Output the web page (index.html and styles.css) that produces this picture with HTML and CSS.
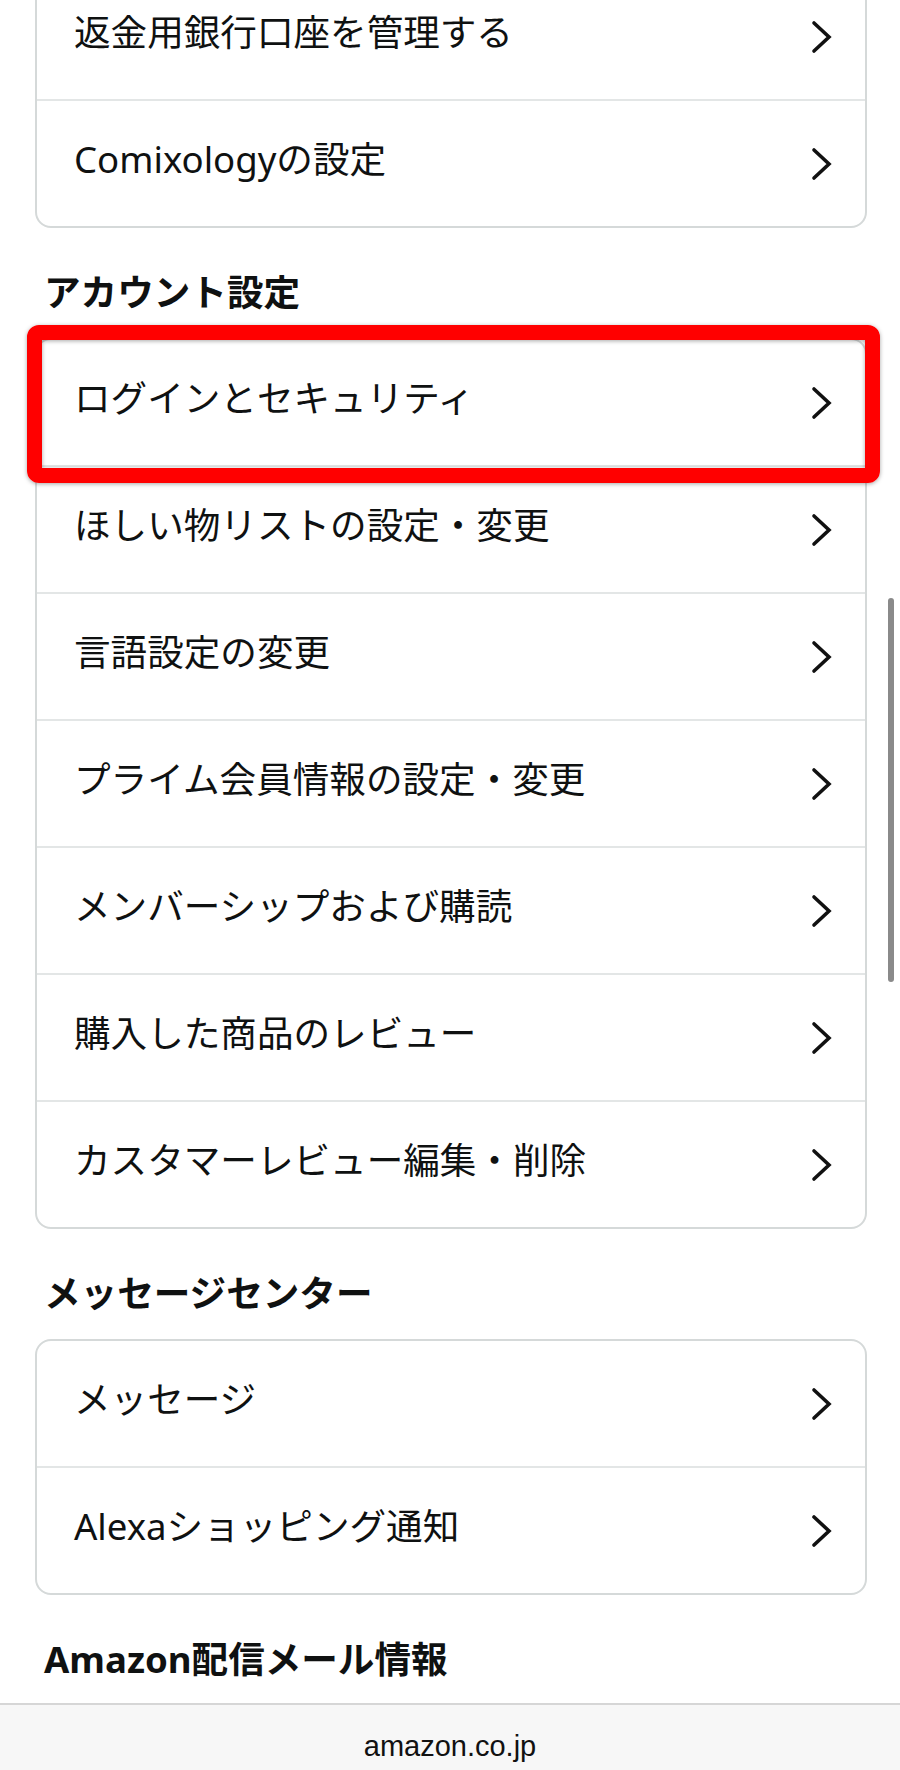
FILE: index.html
```html
<!DOCTYPE html>
<html lang="ja">
<head>
<meta charset="utf-8">
<title>アカウントサービス</title>
<link rel="stylesheet" href="styles.css">
</head>
<body>
<main class="page">
  <section class="section">
    <div class="card">
      <a class="row" href="#"><span class="label">返金用銀行口座を管理する</span><svg class="chev" viewBox="0 0 22 34" width="22" height="34"><polyline points="3,3 18,17 3,31"/></svg></a>
      <a class="row" href="#"><span class="label">Comixologyの設定</span><svg class="chev" viewBox="0 0 22 34" width="22" height="34"><polyline points="3,3 18,17 3,31"/></svg></a>
    </div>
  </section>

  <section class="section">
    <h2 class="section-title">アカウント設定</h2>
    <div class="card card--marked">
      <div class="highlight"></div>
      <a class="row" href="#"><span class="label">ログインとセキュリティ</span><svg class="chev" viewBox="0 0 22 34" width="22" height="34"><polyline points="3,3 18,17 3,31"/></svg></a>
      <a class="row" href="#"><span class="label">ほしい物リストの設定・変更</span><svg class="chev" viewBox="0 0 22 34" width="22" height="34"><polyline points="3,3 18,17 3,31"/></svg></a>
      <a class="row" href="#"><span class="label">言語設定の変更</span><svg class="chev" viewBox="0 0 22 34" width="22" height="34"><polyline points="3,3 18,17 3,31"/></svg></a>
      <a class="row" href="#"><span class="label">プライム会員情報の設定・変更</span><svg class="chev" viewBox="0 0 22 34" width="22" height="34"><polyline points="3,3 18,17 3,31"/></svg></a>
      <a class="row" href="#"><span class="label">メンバーシップおよび購読</span><svg class="chev" viewBox="0 0 22 34" width="22" height="34"><polyline points="3,3 18,17 3,31"/></svg></a>
      <a class="row" href="#"><span class="label">購入した商品のレビュー</span><svg class="chev" viewBox="0 0 22 34" width="22" height="34"><polyline points="3,3 18,17 3,31"/></svg></a>
      <a class="row" href="#"><span class="label">カスタマーレビュー編集・削除</span><svg class="chev" viewBox="0 0 22 34" width="22" height="34"><polyline points="3,3 18,17 3,31"/></svg></a>
    </div>
  </section>

  <section class="section">
    <h2 class="section-title">メッセージセンター</h2>
    <div class="card">
      <a class="row" href="#"><span class="label">メッセージ</span><svg class="chev" viewBox="0 0 22 34" width="22" height="34"><polyline points="3,3 18,17 3,31"/></svg></a>
      <a class="row" href="#"><span class="label">Alexaショッピング通知</span><svg class="chev" viewBox="0 0 22 34" width="22" height="34"><polyline points="3,3 18,17 3,31"/></svg></a>
    </div>
  </section>

  <section class="section">
    <h2 class="section-title">Amazon配信メール情報</h2>
  </section>
</main>

<div class="scrollbar"></div>

<footer class="url-bar">amazon.co.jp</footer>
</body>
</html>
```

FILE: styles.css
```css
html, body {
  margin: 0;
  padding: 0;
  background: #ffffff;
}

body {
  font-family: "Noto Sans", "Noto Sans CJK JP", sans-serif;
  color: #0f1111;
  overflow: hidden;
}

.page {
  display: flex;
  flex-direction: column;
  gap: 44px;
  margin-top: -28px;
  padding: 0 33px 120px 35px;
}

.section {
  display: flex;
  flex-direction: column;
  gap: 22px;
}

.section-title {
  margin: 0 0 0 9px;
  padding-bottom: 4px;
  font-size: 36.6px;
  line-height: 40px;
  font-weight: 700;
  color: #0f1111;
}

.card {
  position: relative;
  display: flex;
  flex-direction: column;
  background: #ffffff;
  border: 2px solid #d5d9d9;
  border-radius: 16px;
}

.row {
  display: flex;
  align-items: center;
  justify-content: space-between;
  height: 125px;
  padding: 0 32px 0 37px;
  color: #0f1111;
  text-decoration: none;
  font-size: 36.6px;
  line-height: 44px;
}

.row + .row {
  border-top: 2px solid #e3e6e6;
}

.label {
  white-space: nowrap;
  margin-bottom: 9px;
}

.chev {
  flex: none;
  display: block;
}

.chev polyline {
  fill: none;
  stroke: #111111;
  stroke-width: 3.6;
  stroke-linecap: round;
  stroke-linejoin: miter;
}

.highlight {
  position: absolute;
  top: -15px;
  left: -10px;
  right: -15px;
  height: 158px;
  box-sizing: border-box;
  border: 15px solid #ff0000;
  border-radius: 12px;
  box-shadow: 0 1px 4px rgba(0, 0, 0, 0.35), inset 0 1px 4px rgba(0, 0, 0, 0.35);
  z-index: 2;
  pointer-events: none;
}

.scrollbar {
  position: fixed;
  top: 598px;
  right: 6px;
  width: 6px;
  height: 384px;
  border-radius: 3px;
  background: #8a8a8a;
}

.url-bar {
  position: fixed;
  left: 0;
  right: 0;
  bottom: 0;
  height: 67px;
  box-sizing: border-box;
  padding-top: 24px;
  background: #f7f7f7;
  border-top: 2px solid #d6d6d6;
  text-align: center;
  font-family: "Liberation Sans", "Noto Sans", sans-serif;
  font-size: 29px;
  line-height: 34px;
  color: #111111;
}
```
